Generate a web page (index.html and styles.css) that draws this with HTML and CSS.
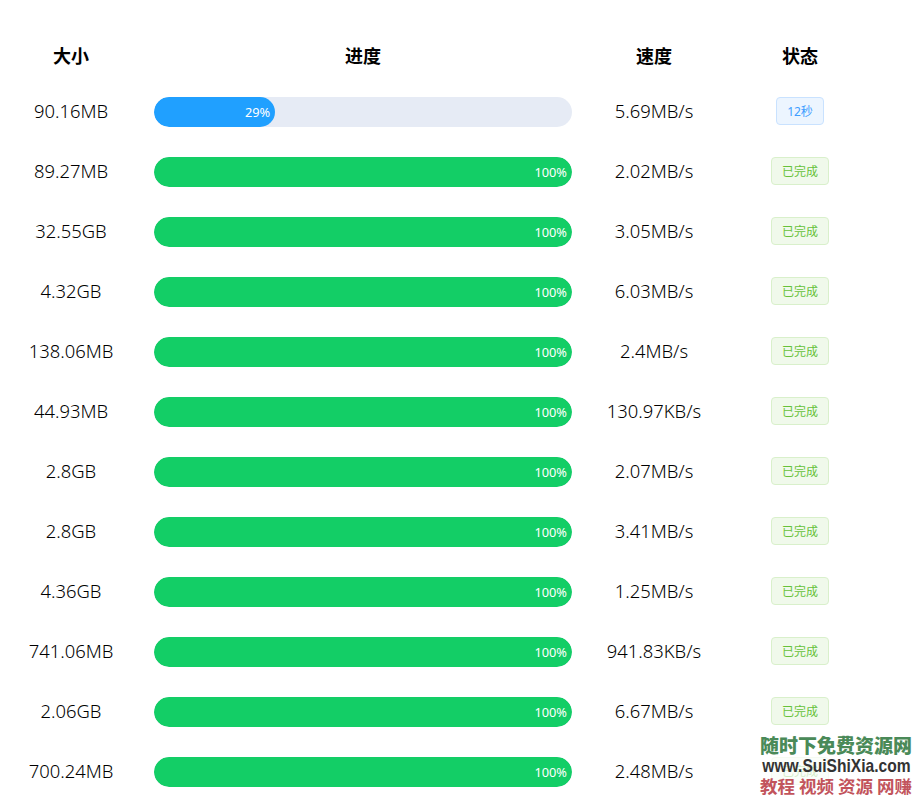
FILE: index.html
```html
<!DOCTYPE html>
<html lang="zh-CN">
<head>
<meta charset="utf-8">
<title>下载列表</title>
<link rel="stylesheet" href="styles.css">
</head>
<body>
<main class="page">
  <div class="row head">
    <div class="cell">大小</div><div class="cell">进度</div><div class="cell">速度</div><div class="cell">状态</div>
  </div>
  <div class="row">
    <div class="cell">90.16MB</div>
    <div class="cell bar-cell"><div class="track"><div class="fill active" style="width:29%"><span>29%</span></div></div></div>
    <div class="cell">5.69MB/s</div>
    <div class="cell tag-cell"><span class="tag wait">12秒</span></div>
  </div>
  <div class="row">
    <div class="cell">89.27MB</div>
    <div class="cell bar-cell"><div class="track"><div class="fill" style="width:100%"><span>100%</span></div></div></div>
    <div class="cell">2.02MB/s</div>
    <div class="cell tag-cell"><span class="tag done">已完成</span></div>
  </div>
  <div class="row">
    <div class="cell">32.55GB</div>
    <div class="cell bar-cell"><div class="track"><div class="fill" style="width:100%"><span>100%</span></div></div></div>
    <div class="cell">3.05MB/s</div>
    <div class="cell tag-cell"><span class="tag done">已完成</span></div>
  </div>
  <div class="row">
    <div class="cell">4.32GB</div>
    <div class="cell bar-cell"><div class="track"><div class="fill" style="width:100%"><span>100%</span></div></div></div>
    <div class="cell">6.03MB/s</div>
    <div class="cell tag-cell"><span class="tag done">已完成</span></div>
  </div>
  <div class="row">
    <div class="cell">138.06MB</div>
    <div class="cell bar-cell"><div class="track"><div class="fill" style="width:100%"><span>100%</span></div></div></div>
    <div class="cell">2.4MB/s</div>
    <div class="cell tag-cell"><span class="tag done">已完成</span></div>
  </div>
  <div class="row">
    <div class="cell">44.93MB</div>
    <div class="cell bar-cell"><div class="track"><div class="fill" style="width:100%"><span>100%</span></div></div></div>
    <div class="cell">130.97KB/s</div>
    <div class="cell tag-cell"><span class="tag done">已完成</span></div>
  </div>
  <div class="row">
    <div class="cell">2.8GB</div>
    <div class="cell bar-cell"><div class="track"><div class="fill" style="width:100%"><span>100%</span></div></div></div>
    <div class="cell">2.07MB/s</div>
    <div class="cell tag-cell"><span class="tag done">已完成</span></div>
  </div>
  <div class="row">
    <div class="cell">2.8GB</div>
    <div class="cell bar-cell"><div class="track"><div class="fill" style="width:100%"><span>100%</span></div></div></div>
    <div class="cell">3.41MB/s</div>
    <div class="cell tag-cell"><span class="tag done">已完成</span></div>
  </div>
  <div class="row">
    <div class="cell">4.36GB</div>
    <div class="cell bar-cell"><div class="track"><div class="fill" style="width:100%"><span>100%</span></div></div></div>
    <div class="cell">1.25MB/s</div>
    <div class="cell tag-cell"><span class="tag done">已完成</span></div>
  </div>
  <div class="row">
    <div class="cell">741.06MB</div>
    <div class="cell bar-cell"><div class="track"><div class="fill" style="width:100%"><span>100%</span></div></div></div>
    <div class="cell">941.83KB/s</div>
    <div class="cell tag-cell"><span class="tag done">已完成</span></div>
  </div>
  <div class="row">
    <div class="cell">2.06GB</div>
    <div class="cell bar-cell"><div class="track"><div class="fill" style="width:100%"><span>100%</span></div></div></div>
    <div class="cell">6.67MB/s</div>
    <div class="cell tag-cell"><span class="tag done">已完成</span></div>
  </div>
  <div class="row">
    <div class="cell">700.24MB</div>
    <div class="cell bar-cell"><div class="track"><div class="fill" style="width:100%"><span>100%</span></div></div></div>
    <div class="cell">2.48MB/s</div>
    <div class="cell tag-cell"><span class="tag done">已完成</span></div>
  </div>
  <aside class="watermark">
    <div class="wm-green">随时下免费资源网</div>
    <div class="wm-url">www.SuiShiXia.com</div>
    <div class="wm-red">教程 视频 资源 网赚</div>
  </aside>
</main>
</body>
</html>
```
FILE: styles.css
```css
* { box-sizing: border-box; }
html, body { margin: 0; padding: 0; background: #fff; }
.page {
  position: relative;
  height: 797px;
  overflow: hidden;
  padding-top: 22px;
  font-family: "Noto Sans", "Noto Sans CJK SC", sans-serif;
  font-size: 18.4px;
  font-weight: 300;
  color: #000;
}
.row {
  display: grid;
  grid-template-columns: 142px 442px 140px 152px;
  height: 60px;
  align-items: center;
}
.cell { text-align: center; line-height: 24px; padding-bottom: 2px; }
.head { font-weight: 700; font-size: 18px; padding-top: 8px; }
.head .cell { padding-bottom: 0; }
.bar-cell { padding: 0 12px; }
.track { height: 30px; border-radius: 15px; background: #e6ebf5; overflow: hidden; }
.fill {
  height: 100%;
  border-radius: 15px;
  background: #13ce66;
  display: flex;
  align-items: center;
  justify-content: flex-end;
  padding-right: 5px;
  color: #fff;
  font-size: 12.8px;
  font-weight: 400;
}
.fill.active { background: #20a0ff; }
.tag-cell { display: flex; justify-content: center; }
.tag {
  height: 28px;
  line-height: 28px;
  padding: 0 10px;
  border: 1px solid;
  border-radius: 4px;
  font-size: 12px;
  font-weight: 400;
}
.tag.wait { background: #ecf5ff; border-color: #c9e2ff; color: #409eff; }
.tag.done { background: #f0f9eb; border-color: #d9f0cb; color: #67c23a; }
.watermark {
  position: absolute;
  left: 756px;
  top: 733px;
  width: 160px;
  height: 64px;
  display: flex;
  flex-direction: column;
  align-items: center;
  font-weight: 700;
  white-space: nowrap;
  background: rgba(255, 255, 255, 0.72);
}
.wm-green {
  font-family: "Noto Sans CJK SC", sans-serif;
  font-size: 19px;
  line-height: 23px;
  font-weight: 900;
  color: #4a8a58;
}
.wm-url {
  font-family: "Liberation Sans", sans-serif;
  font-size: 19px;
  line-height: 19px;
  color: #333;
  transform: scaleX(0.82);
}
.wm-red {
  font-family: "Noto Sans CJK SC", serif;
  font-size: 17.5px;
  line-height: 22px;
  color: #c2545c;
}
```
